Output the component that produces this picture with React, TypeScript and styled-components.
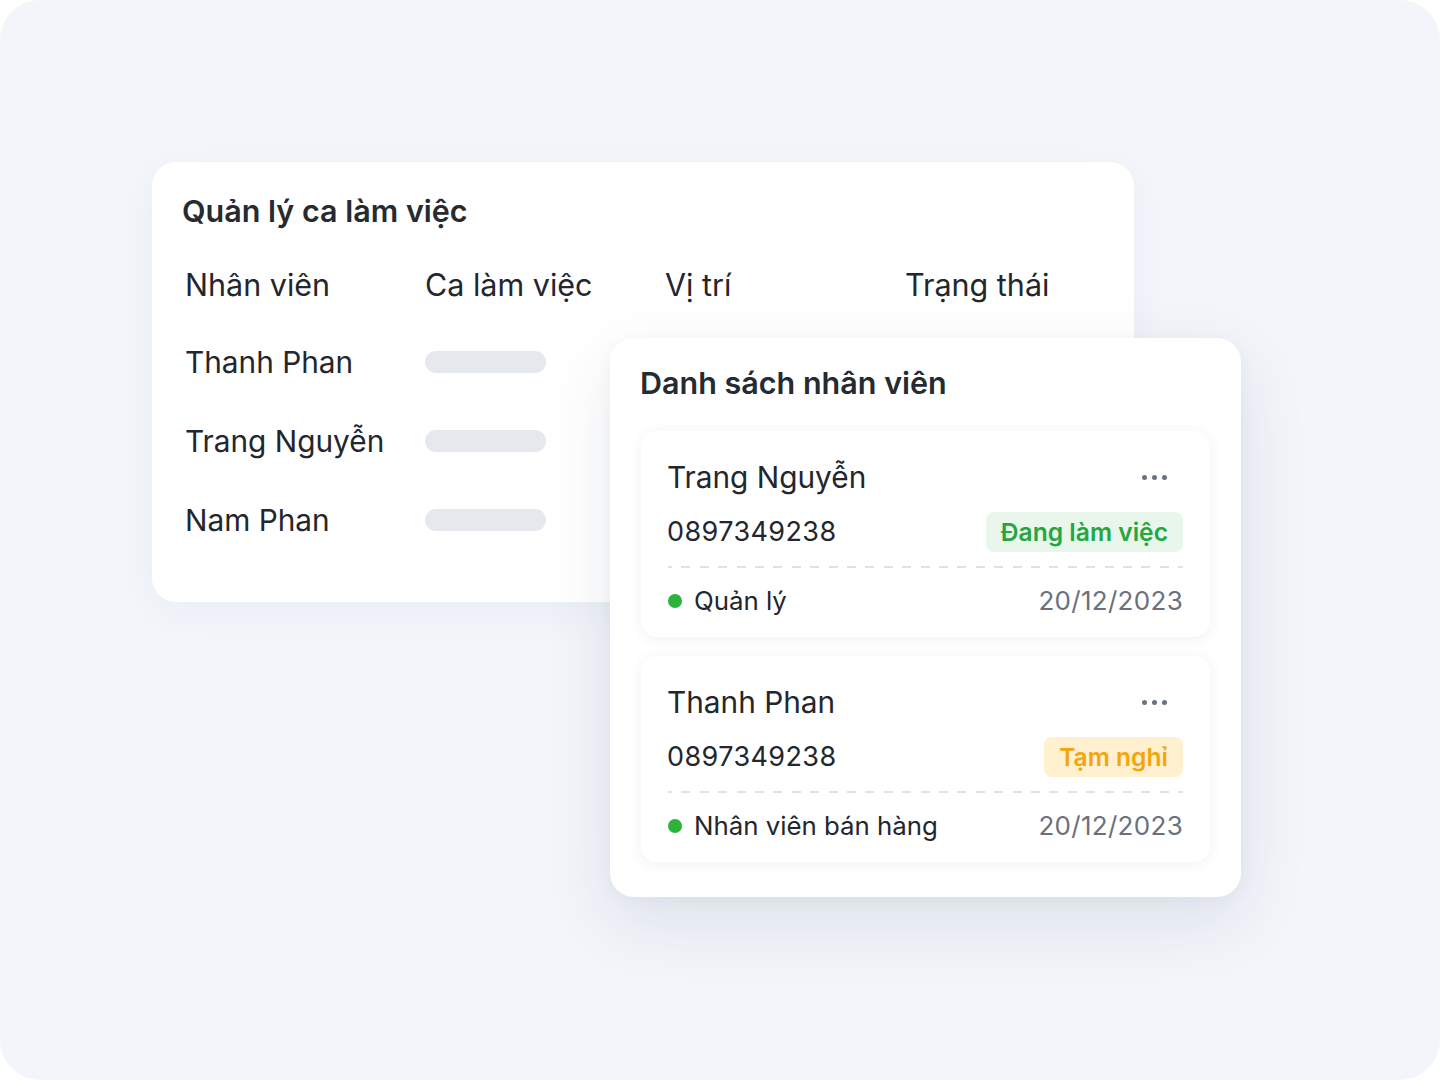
import styled, { createGlobalStyle } from "styled-components";

const GlobalStyle = createGlobalStyle`
  * { box-sizing: border-box; }
  body {
    margin: 0;
    background: #ffffff;
    font-family: Inter, "Noto Sans", "Liberation Sans", sans-serif;
    color: #23262d;
  }
`

const Canvas = styled.div`
    position: relative;
    width: 1440px;
    height: 1080px;
    border-radius: 40px;
    background: #f2f5fa;
    overflow: hidden;
`

const Window = styled.div<{ $x: number; $y: number; $w: number; $h: number }>`
    position: absolute;
    left: ${p => p.$x}px;
    top: ${p => p.$y}px;
    width: ${p => p.$w}px;
    height: ${p => p.$h}px;
    background: #ffffff;
    border-radius: 24px;
    padding: 28px 30px;
`

const ShiftWindow = styled(Window)`
    padding-top: 32px;
    box-shadow: 0 10px 40px rgba(40, 55, 90, 0.04);
`

const StaffWindow = styled(Window)`
    padding: 28px 31px 35px 31px;
    box-shadow: 0 24px 70px rgba(40, 55, 90, 0.10), 0 4px 16px rgba(40, 55, 90, 0.04);
`

const Title = styled.div`
    font-size: 30.5px;
    line-height: 34px;
    font-weight: 600;
    color: #262a31;
`

const StaffTitle = styled(Title)`
    margin-left: -1px;
`

const Table = styled.div`
    display: grid;
    grid-template-columns: repeat(4, 240px);
    grid-auto-rows: 34px;
    row-gap: 45px;
    margin-top: 38px;
    padding-left: 3px;
    align-items: center;

    & > :nth-child(-n + 4) {
        margin-bottom: -3px;
    }
`

const Cell = styled.div<{ $head?: boolean }>`
    font-size: ${p => (p.$head ? "30.5px" : "29.8px")};
    line-height: 34px;
    color: #23262d;
    white-space: nowrap;
`

const Skeleton = styled.div`
    width: 121px;
    height: 22px;
    border-radius: 11px;
    background: #e5e8ed;
`

const List = styled.div`
    display: flex;
    flex-direction: column;
    gap: 19px;
    margin-top: 31px;
`

const StaffCard = styled.div`
    background: #ffffff;
    border-radius: 16px;
    padding: 29px 27px 19px 27px;
    box-shadow: 0 2px 14px rgba(40, 55, 90, 0.07);
`

const Row = styled.div`
    display: flex;
    align-items: center;
    justify-content: space-between;
`

const Name = styled.div`
    font-size: 29.8px;
    line-height: 34px;
    color: #23262d;
    margin-left: -1px;
`

const Dots = styled.div`
    display: flex;
    gap: 5px;
    margin-right: 16px;
    span {
        width: 5px;
        height: 5px;
        border-radius: 50%;
        background: #6b7280;
    }
`

const InfoRow = styled(Row)`
    margin-top: 18px;
`

const Divider = styled.div`
    height: 2px;
    margin-top: 14px;
    background: repeating-linear-gradient(
        to right,
        #dde2ea 0 9px,
        transparent 9px 18.4px
    );
    background-position: -5px 0;
`

const Phone = styled.div`
    font-size: 27px;
    line-height: 40px;
    letter-spacing: 0.4px;
    color: #23262d;
    margin-left: -1px;
`

const Badge = styled.div<{ $tone: "green" | "orange" }>`
    height: 40px;
    padding: 0 15px;
    border-radius: 8px;
    display: flex;
    align-items: center;
    font-size: 24.6px;
    font-weight: 600;
    background: ${p => (p.$tone === "green" ? "#e8f6ec" : "#fff0cf")};
    color: ${p => (p.$tone === "green" ? "#26a641" : "#f5a50c")};
`

const MetaRow = styled(Row)`
    margin-top: 16px;
`

const Role = styled.div`
    display: flex;
    align-items: center;
    gap: 12px;
    font-size: 25.8px;
    line-height: 34px;
    color: #23262d;
    &::before {
        content: "";
        width: 14px;
        height: 14px;
        border-radius: 50%;
        background: #2bb33e;
    }
`

const DateText = styled.div`
    font-size: 26px;
    line-height: 34px;
    color: #6b717c;
    letter-spacing: 0.3px;
`

const shifts = ["Thanh Phan", "Trang Nguyễn", "Nam Phan"];

const staff = [
    { name: "Trang Nguyễn", phone: "0897349238", status: "Đang làm việc", tone: "green" as const, role: "Quản lý", date: "20/12/2023" },
    { name: "Thanh Phan", phone: "0897349238", status: "Tạm nghỉ", tone: "orange" as const, role: "Nhân viên bán hàng", date: "20/12/2023" },
];

const App = () => {
    return <>
        <GlobalStyle />
        <Canvas>
            <ShiftWindow $x={152} $y={162} $w={982} $h={440}>
                <Title>Quản lý ca làm việc</Title>
                <Table>
                    <Cell $head>Nhân viên</Cell>
                    <Cell $head>Ca làm việc</Cell>
                    <Cell $head>Vị trí</Cell>
                    <Cell $head>Trạng thái</Cell>
                    {shifts.map(n => <>
                        <Cell key={n}>{n}</Cell>
                        <Skeleton />
                        <div />
                        <div />
                    </>)}
                </Table>
            </ShiftWindow>
            <StaffWindow $x={610} $y={338} $w={631} $h={559}>
                <StaffTitle>Danh sách nhân viên</StaffTitle>
                <List>
                    {staff.map(s => (
                        <StaffCard key={s.name}>
                            <Row>
                                <Name>{s.name}</Name>
                                <Dots><span /><span /><span /></Dots>
                            </Row>
                            <InfoRow>
                                <Phone>{s.phone}</Phone>
                                <Badge $tone={s.tone}>{s.status}</Badge>
                            </InfoRow>
                            <Divider />
                            <MetaRow>
                                <Role>{s.role}</Role>
                                <DateText>{s.date}</DateText>
                            </MetaRow>
                        </StaffCard>
                    ))}
                </List>
            </StaffWindow>
        </Canvas>
    </>
}

export default App;
